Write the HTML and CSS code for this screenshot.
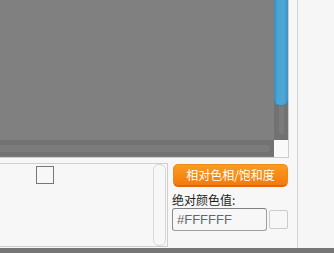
FILE: index.html
```html
<!DOCTYPE html>
<html lang="zh">
<head>
<meta charset="utf-8">
<link rel="stylesheet" href="styles.css">
</head>
<body>
<div class="page">
  <div class="top">
    <div class="main">
      <div class="canvas-box">
        <div class="viewport"></div>
        <div class="vscroll"><div class="vthumb"></div><div class="vgroove"></div></div>
        <div class="hscroll"><div class="hgroove"></div></div>
        <div class="corner"></div>
      </div>
      <div class="controls">
        <div class="list-box">
          <div class="check"></div>
          <div class="track"></div>
        </div>
        <div class="side-controls">
          <div class="btn">相对色相/饱和度</div>
          <div class="label">绝对颜色值:</div>
          <div class="color-row">
            <div class="hex-input">#FFFFFF</div>
            <div class="swatch"></div>
          </div>
        </div>
      </div>
    </div>
    <div class="side"></div>
  </div>
  <div class="bottom-bar"></div>
</div>
</body>
</html>
```

FILE: styles.css
```css
html, body {
  margin: 0;
  padding: 0;
}
body {
  width: 334px;
  height: 253px;
  overflow: hidden;
  background: #f7f7f7;
  font-family: "Noto Sans CJK SC", "Noto Sans", sans-serif;
}
.page {
  display: flex;
  flex-direction: column;
  height: 253px;
}
.top {
  display: flex;
  height: 248px;
}
.main {
  width: 297px;
  display: flex;
  flex-direction: column;
}
.side {
  flex: 1;
  border-left: 1px solid #d2d2d2;
  background: #f6f6f6;
}
.bottom-bar {
  flex: 1;
  background: #767676;
}
.canvas-box {
  width: 288px;
  height: 157px;
  border-right: 1px solid #cdcdcd;
  border-bottom: 1px solid #cdcdcd;
  display: grid;
  grid-template-columns: 274px 14px;
  grid-template-rows: 140px 17px;
}
.viewport {
  background: #808080;
}
.vscroll {
  background: #727272;
  display: flex;
  flex-direction: column;
  align-items: center;
}
.vthumb {
  width: 14px;
  height: 105px;
  border-radius: 0 0 6px 6px;
  background: linear-gradient(to right, #3a8cc0, #4aa4d3 25%, #4ca7d6 70%, #3d90c4);
  box-shadow: 0 1px 0 #3a7fae;
}
.vgroove {
  width: 5px;
  height: 28px;
  margin-top: 1px;
  border-radius: 0 0 3px 3px;
  background: #7b7b7b;
}
.hscroll {
  background: #727272;
  display: flex;
  align-items: flex-start;
  padding-top: 5px;
  box-sizing: border-box;
  border-bottom: 1px solid #7a7a7a;
}
.hgroove {
  width: 270px;
  height: 7px;
  border-radius: 0 4px 4px 0;
  background: #7b7b7b;
}
.corner {
  background: #f9f9f9;
}
.controls {
  margin-top: 5px;
  display: flex;
  align-items: flex-start;
}
.list-box {
  width: 167px;
  height: 82px;
  border-top: 1px solid #cfcfcf;
  border-right: 1px solid #cfcfcf;
  border-bottom: 1px solid #cfcfcf;
  display: flex;
  justify-content: space-between;
  align-items: flex-start;
}
.check {
  width: 16px;
  height: 16px;
  margin-left: 36px;
  margin-top: 2px;
  border: 1px solid #777;
}
.track {
  width: 13px;
  height: 82px;
  box-sizing: border-box;
  margin-right: 1px;
  border: 1px solid #d8d8d8;
  border-radius: 6px;
}
.side-controls {
  margin-left: 4px;
  display: flex;
  flex-direction: column;
}
.btn {
  margin-left: 1px;
  margin-top: 1px;
  width: 115px;
  height: 23px;
  box-sizing: border-box;
  border-radius: 5px;
  background: linear-gradient(#fa9c20, #f68a14 55%, #f37a10);
  border: 1px solid #ee8a1a;
  border-bottom: 2px solid #e0660c;
  color: #fff;
  font-size: 12px;
  line-height: 19px;
  text-align: center;
}
.label {
  margin-top: 6px;
  font-size: 12px;
  line-height: 14px;
  color: #1c1c1c;
}
.color-row {
  margin-top: 1px;
  display: flex;
  align-items: center;
}
.hex-input {
  width: 95px;
  height: 23px;
  box-sizing: border-box;
  border: 1px solid #a0a0a0;
  border-top-color: #808080;
  border-left-color: #8a8a8a;
  border-radius: 3px;
  padding-left: 4px;
  font-family: "Liberation Sans", Arial, sans-serif;
  font-size: 13px;
  line-height: 21px;
  color: #5f6870;
}
.swatch {
  margin-left: 2px;
  width: 19px;
  height: 19px;
  box-sizing: border-box;
  border: 1px solid #cccccc;
  border-radius: 2px;
}
```
